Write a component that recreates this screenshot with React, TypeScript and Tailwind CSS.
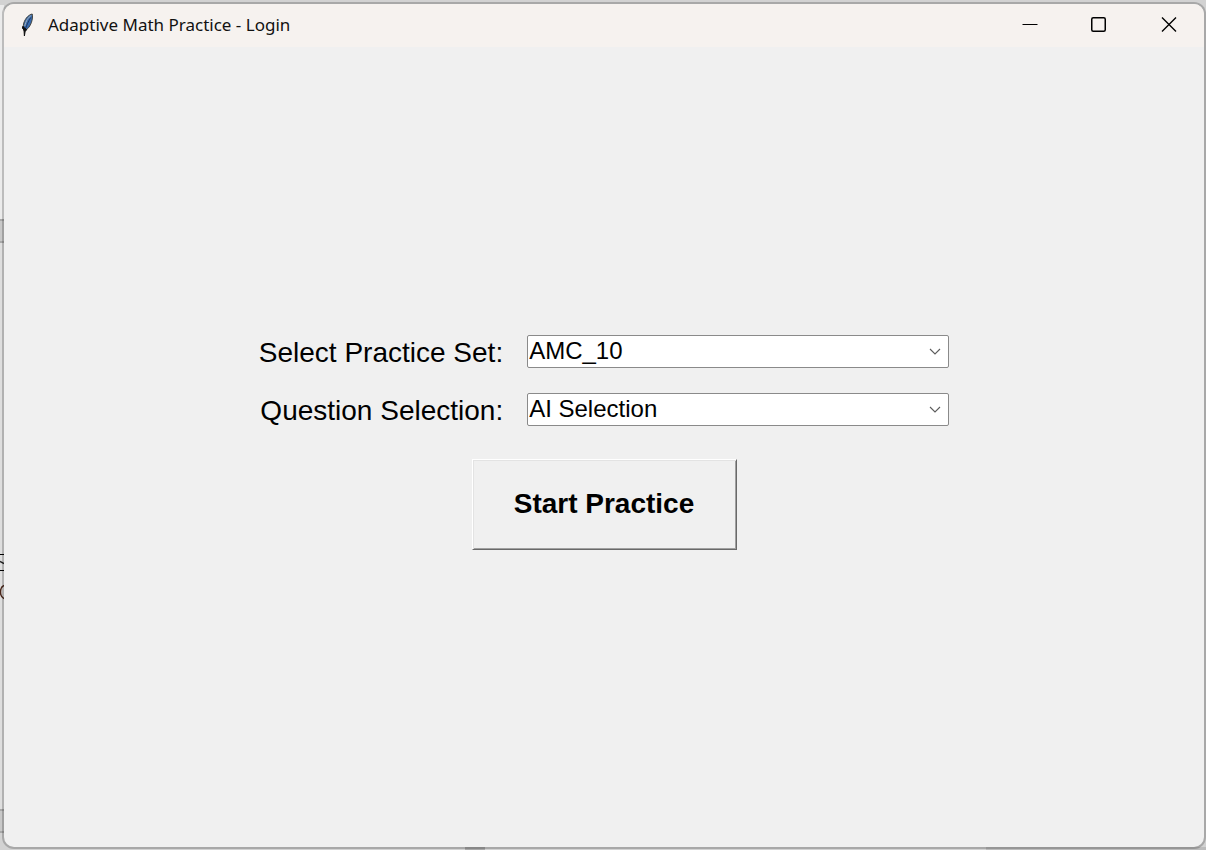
import { useState } from 'react';

function FeatherIcon() {
  return (
    <svg className="h-6 w-4" viewBox="0 0 16 24" aria-hidden="true">
      <path d="M12.2 1 C9 1.6 5.4 5 3.8 10 C3 13 3 15.5 3.8 17.5 L5.4 17.5 C8.6 15.5 11.8 11 12.4 5 C12.6 3.4 12.6 2 12.2 1 Z" fill="#3569ad" stroke="#44443e" strokeWidth="1" />
      <path d="M11.2 2.6 C8.4 4 5.8 8 4.8 13" fill="none" stroke="#a9b3b8" strokeWidth="1" />
      <path d="M10.8 4.5 C8.4 8 6.2 13 4.8 18" fill="none" stroke="#1b2b4c" strokeWidth="0.8" />
      <path d="M3 13 L2.4 15 L4 17 L4.4 23 L5.2 18 L7 16.5" fill="#111" stroke="#111" strokeWidth="1" />
    </svg>
  );
}

function TitleBar() {
  return (
    <header className="flex h-[43px] shrink-0 items-center bg-[#f6f2ef] pb-[2px] pl-4">
      <FeatherIcon />
      <h1 className="ml-3 flex-1 font-['Noto_Sans',sans-serif] text-[17px] leading-6 text-[#111]">
        Adaptive Math Practice - Login
      </h1>
      <button type="button" aria-label="Minimize" className="flex h-full w-[69px] items-center justify-center">
        <svg className="size-4" viewBox="0 0 16 16"><path d="M0.5 7.5H15.5" stroke="#000" /></svg>
      </button>
      <button type="button" aria-label="Maximize" className="flex h-full w-[69px] items-center justify-center">
        <svg className="size-4" viewBox="0 0 16 16"><rect x="0.75" y="0.75" width="13.5" height="13.5" rx="1.5" fill="none" stroke="#000" strokeWidth="1.5" /></svg>
      </button>
      <button type="button" aria-label="Close" className="flex h-full w-[71px] items-center justify-center">
        <svg className="size-4" viewBox="0 0 16 16"><path d="M1 0.5L15 14.5M15 0.5L1 14.5" stroke="#000" strokeWidth="1.4" /></svg>
      </button>
    </header>
  );
}

type PickerProps = { id: string; label: string; options: string[] };

function Picker({ id, label, options }: PickerProps) {
  const [value, setValue] = useState(options[0]);
  return (
    <>
      <label htmlFor={id} className="pt-[3px] text-right text-[28px] leading-[30px]">{label}</label>
      <div className="grid w-[422px] items-center">
        <select
          id={id}
          value={value}
          onChange={(e) => setValue(e.target.value)}
          className="col-start-1 row-start-1 h-[33px] w-full appearance-none rounded-[2px] border border-[#8a8a8a] bg-white pr-8 pb-px pl-px text-2xl leading-7"
        >
          {options.map((o) => <option key={o}>{o}</option>)}
        </select>
        <svg className="pointer-events-none col-start-1 row-start-1 mr-2 h-3 w-3 justify-self-end" viewBox="0 0 12 12" aria-hidden="true">
          <path d="M1 4L6 9L11 4" fill="none" stroke="#5c5c5c" strokeWidth="1.1" />
        </svg>
      </div>
    </>
  );
}

function Desktop() {
  return (
    <div aria-hidden="true" className="absolute inset-0 overflow-hidden bg-[#d2d2d2]">
      <div className="absolute top-[5px] left-0 h-[214px] w-1 bg-[#ebebeb]" />
      <div className="absolute top-[219px] left-0 h-6 w-1 border-y-2 border-[#a9a9a9] bg-[#c8c8c8]" />
      <div className="absolute top-[243px] left-0 h-[566px] w-1 bg-[#dedede]" />
      <div className="absolute top-[554px] left-0 h-[17px] w-1 border-y border-black" />
      <svg className="absolute top-[556px] left-0 h-[44px] w-1" viewBox="0 0 4 44">
        <path d="M0 5.5L4 7.5" stroke="#222" strokeWidth="1.5" fill="none" />
        <path d="M4 29.5Q0.5 31 0.5 36T4 42.5" stroke="#4a2518" strokeWidth="1.5" fill="none" />
      </svg>
      <div className="absolute top-[809px] left-0 h-6 w-1 border-y-2 border-[#a9a9a9] bg-[#c8c8c8]" />
      <div className="absolute bottom-0 left-[465px] h-[3px] w-5 bg-[#a9a9a9]" />
      <div className="absolute right-0 bottom-0 h-[3px] w-[220px] bg-[#bcbcbc]" />
    </div>
  );
}

export default function App() {
  return (
    <div className="relative flex min-h-screen pt-[2px] pb-px pl-[2px] font-['Liberation_Sans',Arial,sans-serif] text-black">
      <Desktop />
      <div className="relative flex flex-1 flex-col overflow-hidden rounded-xl border-2 border-black/20 bg-[#f0f0f0] bg-clip-padding">
        <TitleBar />
        <main className="flex flex-1 items-center justify-center pb-[10px]">
          <form onSubmit={(e) => e.preventDefault()} className="flex flex-col items-center">
            <div className="grid grid-cols-[auto_auto] items-center gap-x-6 gap-y-[25px]">
              <Picker id="practice-set" label="Select Practice Set:" options={['AMC_10', 'AMC_12']} />
              <Picker id="question-selection" label="Question Selection:" options={['AI Selection', 'Random']} />
            </div>
            <button
              type="submit"
              className="mt-[33px] h-[91px] w-[265px] border border-t-white border-r-[#696969] border-b-[#696969] border-l-white bg-[#f0f0f0] text-[28px] leading-8 font-bold shadow-[inset_1px_1px_0_#e3e3e3,inset_-1px_-1px_0_#a0a0a0]"
            >
              Start Practice
            </button>
          </form>
        </main>
      </div>
    </div>
  );
}
